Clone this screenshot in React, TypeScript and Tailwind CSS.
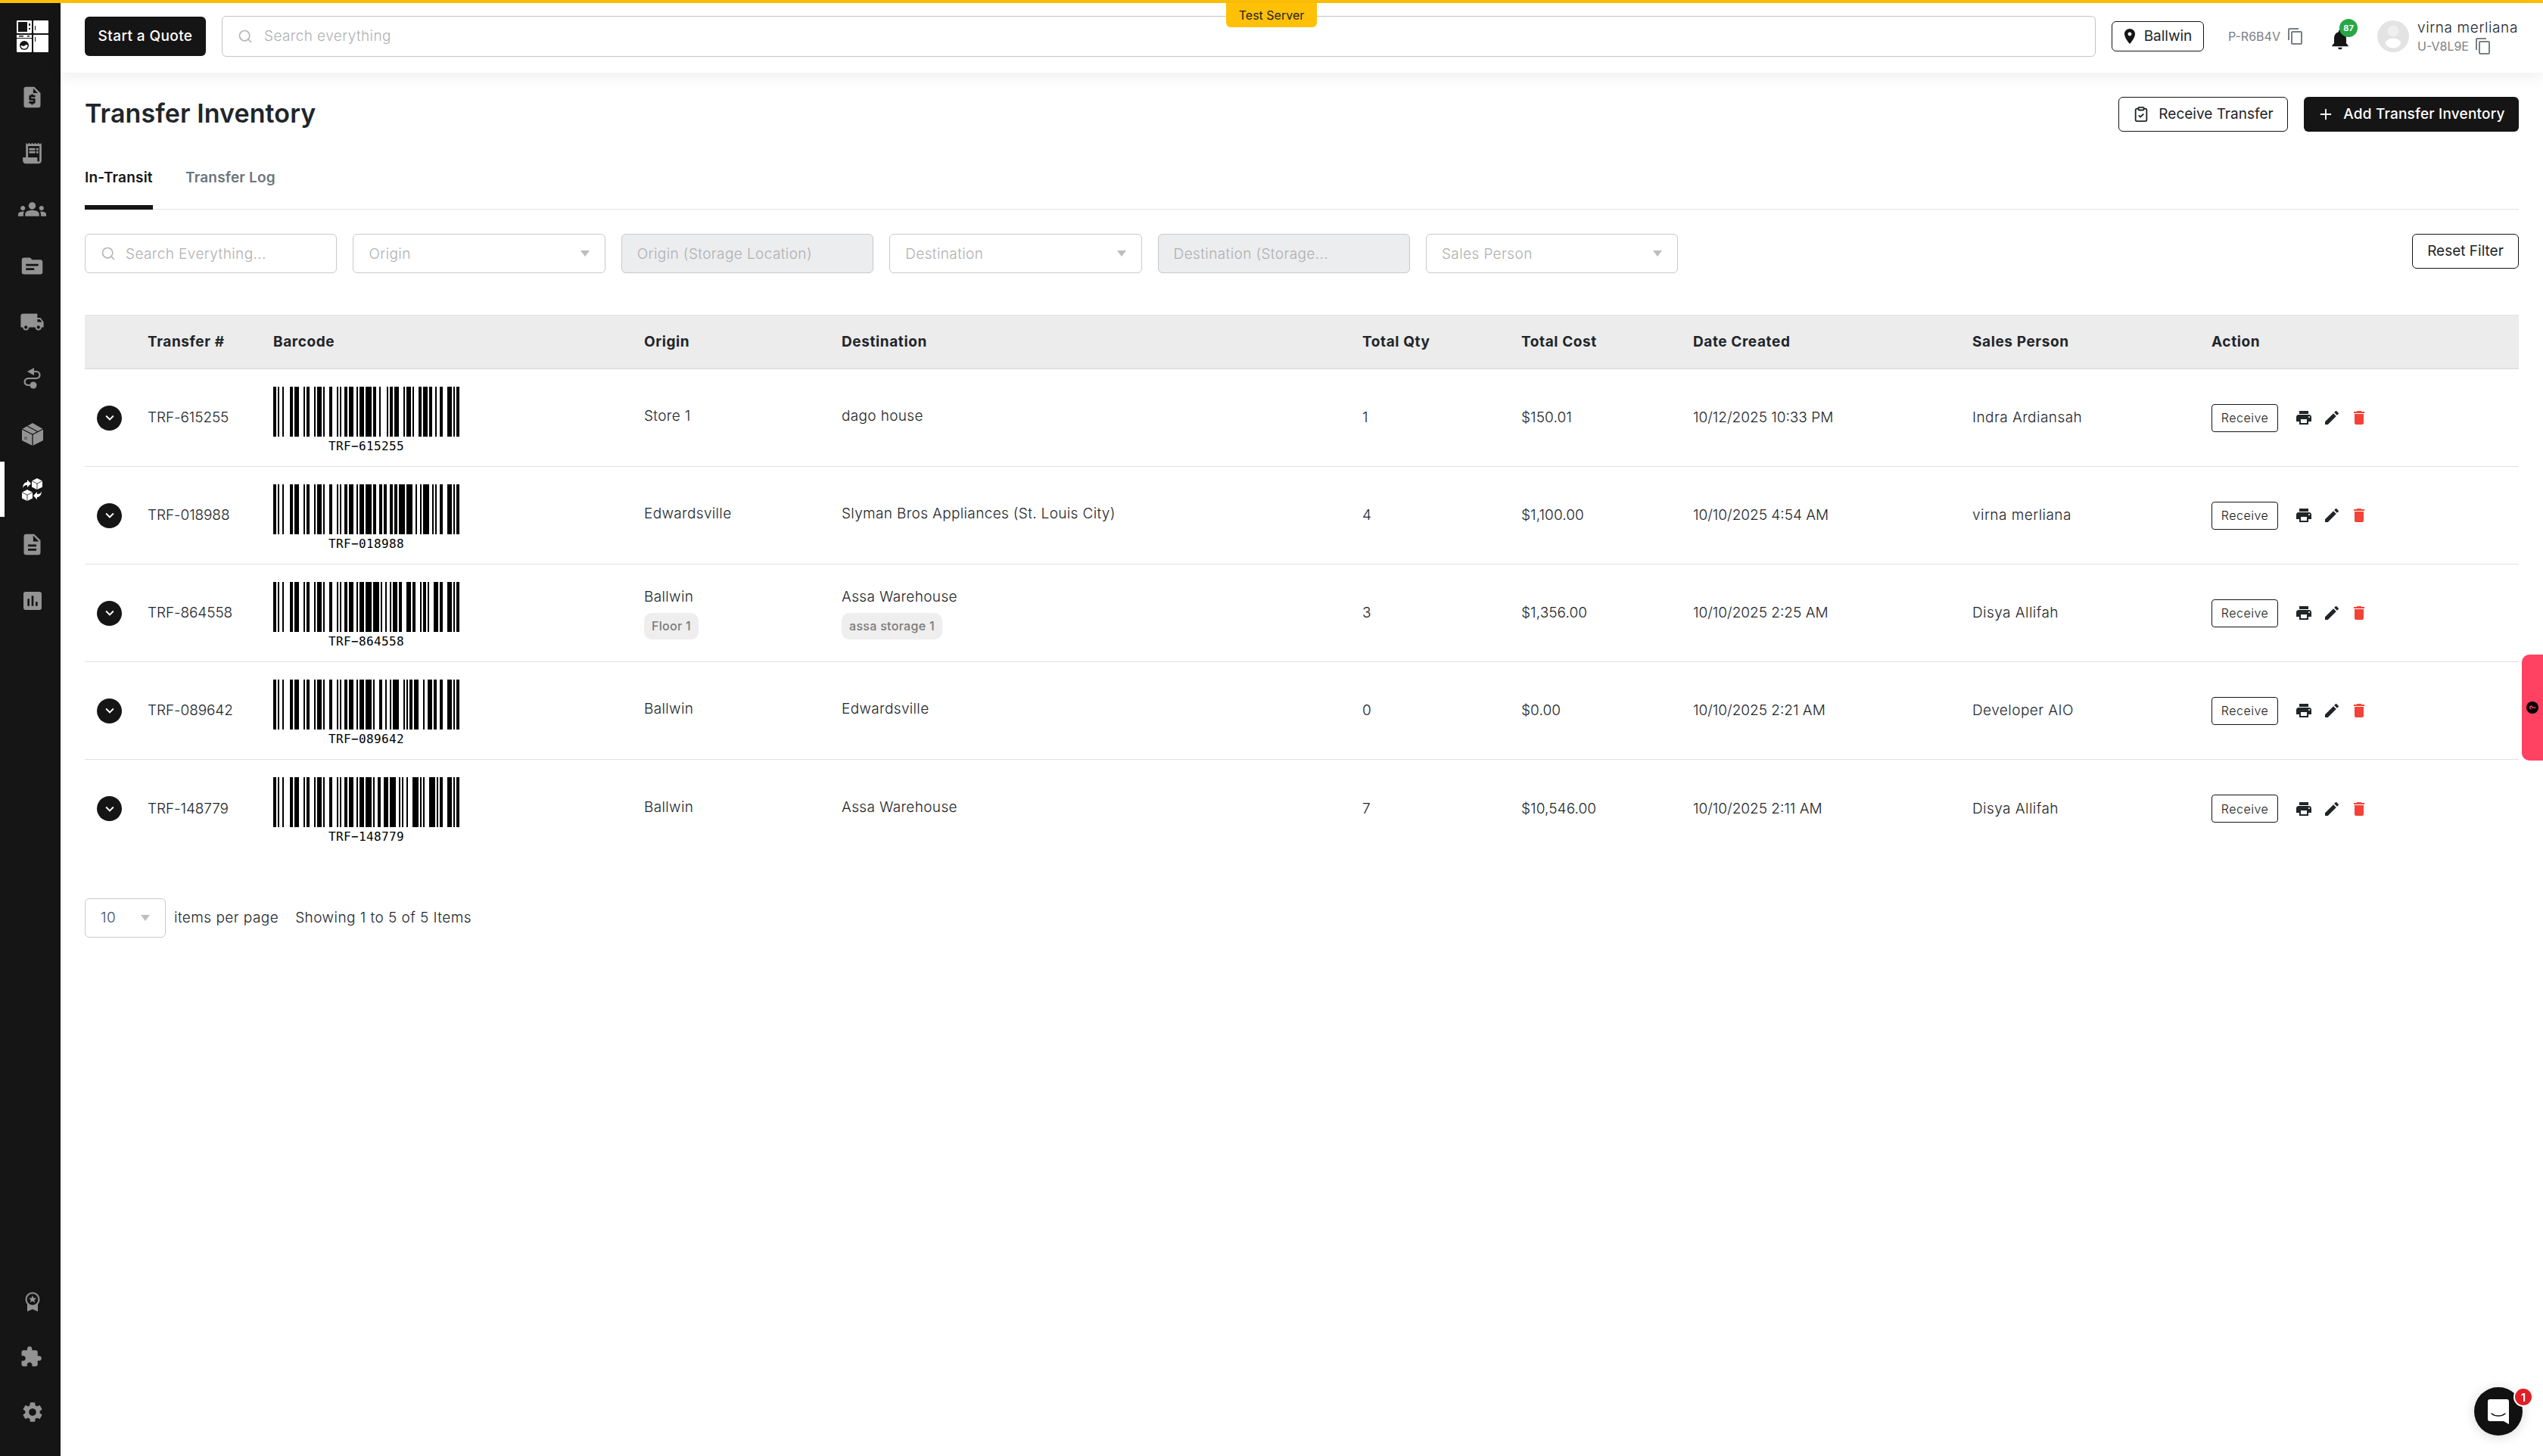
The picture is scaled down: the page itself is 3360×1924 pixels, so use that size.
import React from "react";
import {
  MdRequestQuote,
  MdReceiptLong,
  MdGroups,
  MdTopic,
  MdLocalShipping,
  MdDescription,
  MdAssessment,
  MdExtension,
  MdSettings,
  MdPrint,
  MdEdit,
  MdDelete,
  MdLocationOn,
  MdNotifications,
  MdContentCopy,
  MdKeyboardArrowDown,
} from "react-icons/md";
import { LuClipboardCheck, LuPlus, LuSearch } from "react-icons/lu";

const CODE128 = [
  "11011001100", "11001101100", "11001100110", "10010011000", "10010001100", "10001001100", "10011001000", "10011000100",
  "10001100100", "11001001000", "11001000100", "11000100100", "10110011100", "10011011100", "10011001110", "10111001100",
  "10011101100", "10011100110", "11001110010", "11001011100", "11001001110", "11011100100", "11001110100", "11101101110",
  "11101001100", "11100101100", "11100100110", "11101100100", "11100110100", "11100110010", "11011011000", "11011000110",
  "11000110110", "10100011000", "10001011000", "10001000110", "10110001000", "10001101000", "10001100010", "11010001000",
  "11000101000", "11000100010", "10110111000", "10110001110", "10001101110", "10111011000", "10111000110", "10001110110",
  "11101110110", "11010001110", "11000101110", "11011101000", "11011100010", "11011101110", "11101011000", "11101000110",
  "11100010110", "11101101000", "11101100010", "11100011010", "11101111010", "11001000010", "11110001010", "10100110000",
  "10100001100", "10010110000", "10010000110", "10000101100", "10000100110", "10110010000", "10110000100", "10011010000",
  "10011000010", "10000110100", "10000110010", "11000010010", "11001010000", "11110111010", "11000010100", "10001111010",
  "10100111100", "10010111100", "10010011110", "10111100100", "10011110100", "10011110010", "11110100100", "11110010100",
  "11110010010", "11011011110", "11011110110", "11110110110", "10101111000", "10100011110", "10001011110", "10111101000",
  "10111100010", "11110101000", "11110100010", "10111011110", "10111101110", "11101011110", "11110101110", "11010000100",
  "11010010000", "11010011100", "1100011101011",
];

// TRF- in set B, then the six digits in set C
const barcodeBits = (code: string) => {
  const digits = code.split("-")[1];
  const values = [52, 50, 38, 13, 99];
  for (let i = 0; i < 6; i += 2) values.push(Number(digits.slice(i, i + 2)));
  const check = values.reduce((sum, v, i) => sum + v * (i + 1), 104) % 103;
  return [104, ...values, check, 106].map((v) => CODE128[v]).join("");
};

const Barcode = ({ code }: { code: string }) => {
  const bits = barcodeBits(code);
  return (
    <div className="flex w-[246px] flex-col items-center">
      <svg width={246} height={66} shapeRendering="crispEdges" className="block">
        {bits.split("").map((b, i) =>
          b === "1" ? <rect key={i} x={i * 2} y={0} width={2} height={66} fill="#000" /> : null
        )}
      </svg>
      <span className="mt-[1px] text-[16px] leading-[24px] text-black [font-family:'DejaVu_Sans_Mono',monospace]">
        {code.replace("-", "\u2212")}
      </span>
    </div>
  );
};

const Logo = () => (
  <svg width="42" height="42" viewBox="0 0 42 42" fill="#fff">
    <rect x="0" y="0" width="20" height="17" rx="1" />
    <rect x="2" y="2" width="12" height="13" fill="#151515" />
    <rect x="16" y="4" width="2" height="3" fill="#151515" />
    <rect x="16" y="10" width="2" height="2" fill="#151515" />
    <rect x="22" y="0" width="20" height="17" rx="1" />
    <rect x="24" y="7" width="1" height="6" fill="#151515" />
    <rect x="0" y="19" width="20" height="4" />
    <rect x="3" y="20" width="6" height="1.5" fill="#151515" />
    <rect x="14" y="20" width="3" height="1.5" fill="#151515" />
    <rect x="0" y="24" width="20" height="18" rx="1" />
    <circle cx="10" cy="33" r="6" fill="#151515" />
    <path d="M5.5 33a4.5 4.5 0 0 0 9 0c-1-2-2.5-1-4 .5-1.5 1-3 0-5-.5z" fill="#fff" />
    <rect x="22" y="19" width="20" height="23" rx="1" />
    <rect x="24" y="22" width="1" height="6" fill="#151515" />
  </svg>
);

const RouteIcon = () => (
  <svg width="24" height="28" viewBox="0 0 24 28" fill="none">
    <path d="M14 0v10L5 5z" fill="#939393" />
    <path d="M13 5h4c6 0 6 9 0 9H7c-7 0-7 9-1 9h6" stroke="#939393" strokeWidth="2.2" />
    <circle cx="13" cy="23" r="4.5" fill="#939393" />
  </svg>
);

const BoxIcon = () => (
  <svg width="30" height="30" viewBox="0 0 30 30">
    <path d="M15 0 29 8v15l-14 7-14-7V8z" fill="#939393" />
    <path d="M1 8l14 7 14-7M15 15v15M8 4l14 7.5" stroke="#151515" strokeWidth="1.3" fill="none" />
    <rect x="4" y="18" width="4" height="4" fill="#6d6d6d" />
  </svg>
);

const BoxPiece = () => (
  <>
    <path d="M7 0l7 3.5v8L7 15 0 11.5v-8z" fill="#fff" />
    <path d="M0 3.5l7 3.5 7-3.5M7 7v8" stroke="#151515" strokeWidth=".8" fill="none" />
  </>
);

const ExchangeIcon = () => (
  <svg width="27" height="30" viewBox="0 0 27 30" fill="#fff">
    <path d="M1 13c0-5 3-8 6-8V2l5 5-5 5V9c-3 0-5 1-6 4z" />
    <path d="M26 17c0 5-3 8-6 8v3l-5-5 5-5v3c3 0 5-1 6-4z" />
    <g transform="translate(13 0)">
      <BoxPiece />
    </g>
    <g transform="translate(0 15)">
      <BoxPiece />
    </g>
  </svg>
);

const AwardIcon = () => (
  <svg width="20" height="26" viewBox="0 0 20 26">
    <path d="M3 15v11l7-3 7 3V15z" fill="#939393" />
    <circle cx="10" cy="10" r="8.5" fill="#151515" stroke="#939393" strokeWidth="2" />
    <path d="M10 5l1.5 3.3 3.5.3-2.7 2.3.9 3.5L10 12.3l-3.2 1.8.9-3.5L5 8.6l3.500-.3z" fill="#939393" />
  </svg>
);

const Caret = () => (
  <svg width="12" height="8" viewBox="0 0 12 8">
    <path d="M0 0h12L6 8z" fill="#bdbdbd" />
  </svg>
);

const Avatar = () => (
  <svg width="42" height="42" viewBox="0 0 42 42">
    <circle cx="21" cy="21" r="21" fill="#e3e3e3" />
    <circle cx="21" cy="14" r="7.5" fill="#efefef" />
    <ellipse cx="21" cy="30" rx="10" ry="6.5" fill="#fff" />
  </svg>
);

const SideItem = ({ children, active, short }: { children: React.ReactNode; active?: boolean; short?: boolean }) => (
  <div
    className={
      "relative flex w-full items-center justify-center pl-[5px] " +
      (short ? "h-[73px] " : "h-[74.4px] ") +
      (active ? "text-white" : "text-[#939393]")
    }
  >
    {active && <span className="absolute left-0 top-0 h-full w-[6px] bg-white" />}
    {children}
  </div>
);

const Sidebar = () => (
  <aside className="flex w-20 shrink-0 flex-col items-center bg-[#151515]">
    <div className="mt-[23px] mb-[22px] pl-[6px]">
      <Logo />
    </div>
    <SideItem><MdRequestQuote size={33} /></SideItem>
    <SideItem><MdReceiptLong size={33} /></SideItem>
    <SideItem><MdGroups size={37} /></SideItem>
    <SideItem><MdTopic size={33} /></SideItem>
    <SideItem><MdLocalShipping size={33} /></SideItem>
    <SideItem><RouteIcon /></SideItem>
    <SideItem short><BoxIcon /></SideItem>
    <SideItem short active><ExchangeIcon /></SideItem>
    <SideItem short><MdDescription size={33} /></SideItem>
    <SideItem><MdAssessment size={32} /></SideItem>
    <div className="mt-auto mb-[22px] flex w-full flex-col">
      <SideItem short><AwardIcon /></SideItem>
      <SideItem short><MdExtension size={30} className="-translate-x-[2px]" /></SideItem>
      <SideItem short><MdSettings size={32} /></SideItem>
    </div>
  </aside>
);

const Header = () => (
  <header className="relative z-10 flex h-[92px] shrink-0 items-center bg-white pb-1 pl-8 pr-8 shadow-[0_4px_20px_rgba(0,0,0,0.08)]">
    <button className="flex h-[52px] w-40 items-center justify-center rounded-[6px] bg-[#151515] text-[19px] font-medium tracking-[0.4px] text-white">
      Start a Quote
    </button>
    <div className="ml-[21px] flex h-[54px] flex-1 items-center rounded-[6px] border border-[#c4c4c4] pl-5 text-[19px] font-light tracking-[0.4px] text-[#b0b0b0]">
      <LuSearch size={20} className="mr-[15px] text-[#b5b5b5]" />
      Search everything
    </div>
    <div className="ml-[21px] flex h-10 w-[122px] items-center justify-center gap-[7px] rounded-[6px] border border-[#151515] text-[19px] text-[#212529]">
      <MdLocationOn size={24} className="-ml-1 text-[#151515]" />
      Ballwin
    </div>
    <div className="ml-8 flex items-center text-[#7b7f85]">
      <span className="w-[74px] text-[16px]">P-R6B4V</span>
      <MdContentCopy size={24} className="ml-[3px]" />
    </div>
    <div className="relative ml-[31px] h-8 w-8 text-[#151515]">
      <MdNotifications size={32} className="absolute left-0 top-[4px]" />
      <span className="absolute -top-[7px] left-[15px] flex h-6 w-6 items-center justify-center rounded-full bg-[#28a745] text-[11px] font-bold text-white">
        87
      </span>
    </div>
    <div className="ml-[33px]">
      <Avatar />
    </div>
    <div className="ml-[11px] flex w-[134px] flex-col items-start">
      <span className="whitespace-nowrap text-[19px] leading-[25px] font-light tracking-[0.6px] text-[#212529]">virna merliana</span>
      <span className="flex items-center text-[#7b7f85]">
        <span className="w-[72px] text-[16px] leading-[24px]">U-V8L9E</span>
        <MdContentCopy size={24} className="ml-[3px]" />
      </span>
    </div>
    <span className="absolute left-[1540px] top-0 flex h-8 w-[120px] items-center justify-center rounded-b-[6px] bg-[#ffc107] text-[16px] text-[#212529]">
      Test Server
    </span>
  </header>
);

const FilterBox = ({ label, disabled, caret, search }: { label: string; disabled?: boolean; caret?: boolean; search?: boolean }) => (
  <div
    className={
      "flex h-[52px] w-[333.4px] items-center rounded-[6px] border border-[#c9c9c9] px-5 text-[19px] font-light tracking-[0.4px] text-[#b0b0b0] " +
      (disabled ? "bg-[#ecedef]" : "bg-white")
    }
  >
    {search && <LuSearch size={20} className="mr-[13px] text-[#b5b5b5]" />}
    <span className="flex-1 pt-[2px]">{label}</span>
    {caret && <Caret />}
  </div>
);

type Row = {
  id: string;
  origin: string;
  originTag?: string;
  destination: string;
  destinationTag?: string;
  qty: string;
  cost: string;
  date: string;
  person: string;
};

const rows: Row[] = [
  { id: "TRF-615255", origin: "Store 1", destination: "dago house", qty: "1", cost: "$150.01", date: "10/12/2025 10:33 PM", person: "Indra Ardiansah" },
  { id: "TRF-018988", origin: "Edwardsville", destination: "Slyman Bros Appliances (St. Louis City)", qty: "4", cost: "$1,100.00", date: "10/10/2025 4:54 AM", person: "virna merliana" },
  { id: "TRF-864558", origin: "Ballwin", originTag: "Floor 1", destination: "Assa Warehouse", destinationTag: "assa storage 1", qty: "3", cost: "$1,356.00", date: "10/10/2025 2:25 AM", person: "Disya Allifah" },
  { id: "TRF-089642", origin: "Ballwin", destination: "Edwardsville", qty: "0", cost: "$0.00", date: "10/10/2025 2:21 AM", person: "Developer AIO" },
  { id: "TRF-148779", origin: "Ballwin", destination: "Assa Warehouse", qty: "7", cost: "$10,546.00", date: "10/10/2025 2:11 AM", person: "Disya Allifah" },
];

const gridCols = "grid grid-cols-[83px_166px_490px_261px_688px_210px_227px_369px_316px_1fr]";

const Tag = ({ children }: { children: React.ReactNode }) => (
  <span className="mt-[6px] inline-flex h-[35px] items-center rounded-[10px] bg-[#eeeeee] px-[10px] text-[16px] font-medium tracking-[0.3px] text-[#7a7a7a]">
    {children}
  </span>
);

const Place = ({ name, tag }: { name: string; tag?: string }) => (
  <div className="flex flex-col items-start">
    <span className={tag ? "" : "-mt-[3px]"}>{name}</span>
    {tag && <Tag>{tag}</Tag>}
  </div>
);

const TableRow = ({ row, last }: { row: Row; last: boolean }) => (
  <div className={gridCols + " h-[129px] items-center text-[19px] font-[350] tracking-[0.35px] text-[#212529] " + (last ? "" : "border-b border-[#dee2e6]")}>
    <div className="pl-4">
      <div className="flex h-[33px] w-[33px] items-center justify-center rounded-full bg-[#151515] text-white">
        <MdKeyboardArrowDown size={22} />
      </div>
    </div>
    <div className="pt-[1px] tracking-[-0.1px]">{row.id}</div>
    <div className="self-start pt-[23px]">
      <Barcode code={row.id} />
    </div>
    <Place name={row.origin} tag={row.originTag} />
    <Place name={row.destination} tag={row.destinationTag} />
    <div className="pt-[1px]">{row.qty}</div>
    <div className="pt-[1px] tracking-[0.1px]">{row.cost}</div>
    <div className="pt-[1px] tracking-[0px]">{row.date}</div>
    <div className="pt-[1px] tracking-[0.45px]">{row.person}</div>
    <div className="flex items-center">
      <button className="flex h-[37px] w-[88px] items-center justify-center rounded-[4px] border border-[#151515] text-[16px] tracking-[0.5px] text-[#151515]">
        Receive
      </button>
      <MdPrint size={24} className="ml-[22px] text-[#212529]" />
      <MdEdit size={24} className="ml-[13px] text-[#212529]" />
      <MdDelete size={24} className="ml-[12px] text-[#f44336]" />
    </div>
  </div>
);

const App = () => {
  return (
    <div className="flex min-h-screen w-full flex-col bg-white [font-family:Inter,sans-serif]">
      <div className="h-1 shrink-0 bg-[#ffc107]" />
      <div className="flex h-[1920px] flex-1">
        <Sidebar />
        <div className="flex min-w-0 flex-1 flex-col">
          <Header />
          <main className="flex flex-col px-8 pt-8">
            <div className="flex h-[46px] items-center justify-between">
              <h1 className="-mt-[3px] text-[34px] font-semibold tracking-[0.1px] text-[#212529]">Transfer Inventory</h1>
              <div className="flex gap-[21px]">
                <button className="flex h-[46px] w-56 items-center justify-center gap-3 rounded-[6px] border border-[#151515] text-[19px] text-[#212529]">
                  <LuClipboardCheck size={22} />
                  Receive Transfer
                </button>
                <button className="flex h-[46px] w-[284px] items-center justify-center gap-3 rounded-[6px] bg-[#151515] text-[19px] font-medium tracking-[0.2px] text-white">
                  <LuPlus size={22} />
                  Add Transfer Inventory
                </button>
              </div>
            </div>

            <div className="mt-[17px] flex h-[86px] gap-[43px] border-b border-[#dee2e6]">
              <div className="flex h-[86px] w-[90px] items-center whitespace-nowrap border-b-[6px] border-[#151515] pt-[8px] text-[19px] font-semibold tracking-[0.2px] text-[#151515]">
                In-Transit
              </div>
              <div className="flex h-[86px] items-center border-b-[6px] border-transparent pt-[8px] text-[19px] font-semibold tracking-[0.2px] text-[#6c757d]">
                Transfer Log
              </div>
            </div>

            <div className="mt-8 flex items-start justify-between">
              <div className="flex gap-[21px]">
                <FilterBox label="Search Everything..." search />
                <FilterBox label="Origin" caret />
                <FilterBox label="Origin (Storage Location)" disabled />
                <FilterBox label="Destination" caret />
                <FilterBox label="Destination (Storage..." disabled />
                <FilterBox label="Sales Person" caret />
              </div>
              <button className="flex h-[46px] w-[141px] items-center justify-center rounded-[6px] border border-[#151515] text-[19px] text-[#212529]">
                Reset Filter
              </button>
            </div>

            <div className="mt-[55px]">
              <div className={gridCols + " h-[72px] items-center border-t border-b-2 border-[#dee2e6] bg-[#ececec] pt-[1px] text-[19px] font-bold tracking-[0.6px] text-[#212529]"}>
                <div />
                <div>Transfer #</div>
                <div>Barcode</div>
                <div>Origin</div>
                <div>Destination</div>
                <div>Total Qty</div>
                <div>Total Cost</div>
                <div>Date Created</div>
                <div>Sales Person</div>
                <div>Action</div>
              </div>
              {rows.map((row, i) => (
                <TableRow key={row.id} row={row} last={i === rows.length - 1} />
              ))}
            </div>

            <div className="mt-[54px] flex items-center text-[19px] font-[350] tracking-[0.45px] text-[#212529]">
              <div className="flex h-[52px] w-[107px] items-center justify-between rounded-[6px] border border-[#c9c9c9] pl-5 pr-5 text-[#3d5170]">
                10
                <Caret />
              </div>
              <span className="ml-[11px]">items per page</span>
              <span className="ml-[22px]">Showing 1 to 5 of 5 Items</span>
            </div>
          </main>
        </div>
      </div>

      <div className="fixed right-0 top-[865px] flex h-[140px] w-7 items-center justify-center rounded-l-[10px] bg-[#ff4162]">
        <span className="flex h-4 w-4 -rotate-90 items-center justify-center rounded-full bg-black text-[11px] font-bold text-[#ff4162]">?</span>
      </div>

      <div className="fixed bottom-[27px] right-[27px] flex h-16 w-16 items-center justify-center rounded-full bg-[#111111] shadow-[0_2px_16px_rgba(0,0,0,0.15)]">
        <svg width="28" height="33" viewBox="0 0 28 33">
          <path d="M3 0h22a3 3 0 0 1 3 3v30l-7-4H3a3 3 0 0 1-3-3V3a3 3 0 0 1 3-3z" fill="#fff" />
          <path d="M5 19c5 4 13 4 18 0" stroke="#111" strokeWidth="1.5" fill="none" strokeLinecap="round" />
        </svg>
        <span className="absolute -right-[12px] top-[2px] flex h-[22px] w-[22px] items-center justify-center rounded-full bg-[#e01f26] text-[14px] font-bold text-white ring-2 ring-white">
          1
        </span>
      </div>
    </div>
  );
};

export default App;
